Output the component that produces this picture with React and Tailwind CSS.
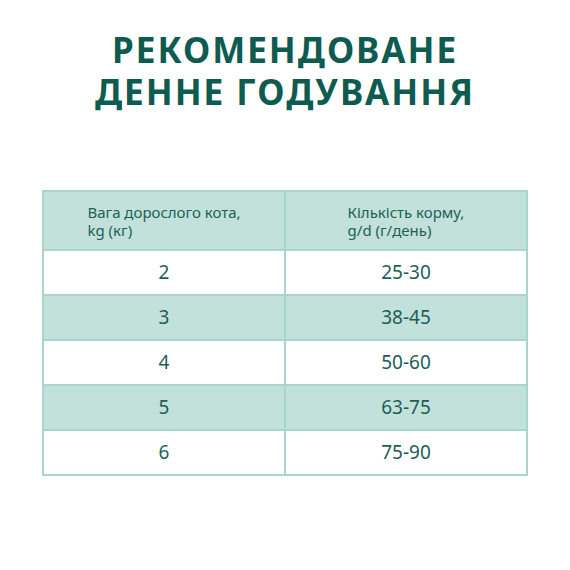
const rows = [
  { weight: "2", amount: "25-30" },
  { weight: "3", amount: "38-45" },
  { weight: "4", amount: "50-60" },
  { weight: "5", amount: "63-75" },
  { weight: "6", amount: "75-90" },
];

function App() {
  return (
    <div className="w-[570px] h-[570px] bg-white font-['Noto_Sans',sans-serif] pt-[29px]">
      <h1 className="text-center font-bold text-[35px] leading-[42px] tracking-[2px] text-[#0e5b4f]">
        РЕКОМЕНДОВАНЕ
        <br />
        ДЕННЕ ГОДУВАННЯ
      </h1>

      <div className="mt-[77px] ml-[42px] w-[486px]">
        <table className="w-full table-fixed border-collapse border-2 border-[#a9d6cc] text-[#1d5f56]">
          <thead>
            <tr className="bg-[#c2e1db] h-[59px]">
              <th className="w-1/2 border-2 border-[#a9d6cc] font-normal text-[15px] leading-[18px]">
                <span className="inline-block text-left">
                  Вага дорослого кота,
                  <br />
                  kg (кг)
                </span>
              </th>
              <th className="w-1/2 border-2 border-[#a9d6cc] font-normal text-[15px] leading-[18px]">
                <span className="inline-block text-left">
                  Кількість корму,
                  <br />
                  g/d (г/день)
                </span>
              </th>
            </tr>
          </thead>
          <tbody>
            {rows.map((row, i) => (
              <tr
                key={row.weight}
                className={i % 2 === 0 ? "bg-white h-[45px]" : "bg-[#c2e1db] h-[45px]"}
              >
                <td className="border-2 border-[#a9d6cc] text-center text-[19px]">
                  {row.weight}
                </td>
                <td className="border-2 border-[#a9d6cc] text-center text-[19px]">
                  {row.amount}
                </td>
              </tr>
            ))}
          </tbody>
        </table>
      </div>
    </div>
  );
}

export default App;
